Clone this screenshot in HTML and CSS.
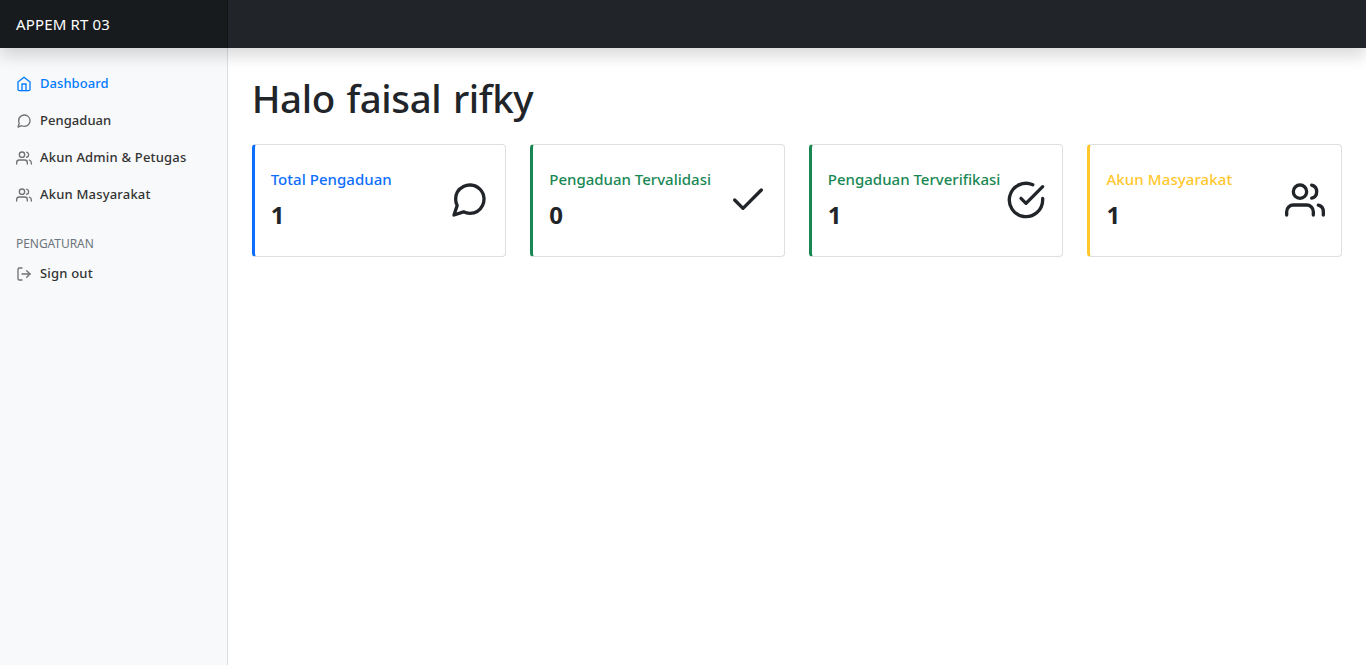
FILE: index.html
```html
<!DOCTYPE html>
<html lang="id">
<head>
<meta charset="utf-8">
<title>Dashboard</title>
<link rel="stylesheet" href="styles.css">
</head>
<body>
<svg class="sprite" xmlns="http://www.w3.org/2000/svg">
  <symbol id="home" viewBox="0 0 24 24"><path d="M3 9l9-7 9 7v11a2 2 0 0 1-2 2H5a2 2 0 0 1-2-2z"/><path d="M9 22V12h6v10"/></symbol>
  <symbol id="message" viewBox="0 0 24 24"><path d="M21 11.5a8.38 8.38 0 0 1-.9 3.8 8.5 8.5 0 0 1-7.6 4.7 8.38 8.38 0 0 1-3.8-.9L3 21l1.9-5.7a8.38 8.38 0 0 1-.9-3.8 8.5 8.5 0 0 1 4.7-7.6 8.38 8.38 0 0 1 3.8-.9h.5a8.48 8.48 0 0 1 8 8v.5z"/></symbol>
  <symbol id="users" viewBox="0 0 24 24"><path d="M17 21v-2a4 4 0 0 0-4-4H5a4 4 0 0 0-4 4v2"/><circle cx="9" cy="7" r="4"/><path d="M23 21v-2a4 4 0 0 0-3-3.87"/><path d="M16 3.13a4 4 0 0 1 0 7.75"/></symbol>
  <symbol id="logout" viewBox="0 0 24 24"><path d="M9 21H5a2 2 0 0 1-2-2V5a2 2 0 0 1 2-2h4"/><path d="M16 17l5-5-5-5"/><path d="M21 12H9"/></symbol>
  <symbol id="check" viewBox="0 0 24 24"><path d="M20 6L9 17l-5-5"/></symbol>
  <symbol id="check-circle" viewBox="0 0 24 24"><path d="M22 11.08V12a10 10 0 1 1-5.93-9.14"/><path d="M22 4L12 14.01l-3-3"/></symbol>
</svg>
<header class="navbar"><a class="brand">APPEM RT 03</a></header>
<div class="layout">
  <nav class="sidebar">
    <a class="nav-link active"><svg class="icon"><use href="#home"/></svg><span>Dashboard</span></a>
    <a class="nav-link"><svg class="icon"><use href="#message"/></svg><span>Pengaduan</span></a>
    <a class="nav-link wide"><svg class="icon"><use href="#users"/></svg><span>Akun Admin &amp; Petugas</span></a>
    <a class="nav-link wide"><svg class="icon"><use href="#users"/></svg><span>Akun Masyarakat</span></a>
    <h6 class="heading">Pengaturan</h6>
    <a class="nav-link wide"><svg class="icon"><use href="#logout"/></svg><span>Sign out</span></a>
  </nav>
  <main class="main">
    <h1 class="title">Halo faisal rifky</h1>
    <div class="cards">
      <section class="card blue"><div><h2 class="label">Total Pengaduan</h2><p class="value">1</p></div><svg class="icon-lg"><use href="#message"/></svg></section>
      <section class="card green"><div><h2 class="label">Pengaduan Tervalidasi</h2><p class="value">0</p></div><svg class="icon-lg"><use href="#check"/></svg></section>
      <section class="card green"><div><h2 class="label">Pengaduan Terverifikasi</h2><p class="value">1</p></div><svg class="icon-lg"><use href="#check-circle"/></svg></section>
      <section class="card yellow"><div><h2 class="label">Akun Masyarakat</h2><p class="value">1</p></div><svg class="icon-lg"><use href="#users"/></svg></section>
    </div>
  </main>
</div>
</body>
</html>
```
FILE: styles.css
```css
* { box-sizing: border-box; }
body {
  margin: 0;
  height: 100vh;
  display: flex;
  flex-direction: column;
  font-family: "Noto Sans", "Open Sans", sans-serif;
  color: #212529;
  background: #fff;
  overflow: hidden;
}
.sprite { display: none; }
svg { fill: none; stroke: currentColor; stroke-width: 2; stroke-linecap: round; stroke-linejoin: round; flex: none; }
.navbar {
  height: 48px;
  flex: none;
  background: #212529;
  box-shadow: 0 8px 16px rgba(0, 0, 0, .15);
  position: relative;
  z-index: 2;
}
.brand {
  display: block;
  width: 16.6667%;
  height: 48px;
  padding: 12px 16px;
  font-size: 15px;
  line-height: 24px;
  letter-spacing: .15px;
  color: #fff;
  background: rgba(0, 0, 0, .25);
  box-shadow: inset -1px 0 0 rgba(0, 0, 0, .25);
}
.layout { flex: 1; display: flex; }
.sidebar {
  width: 16.6667%;
  flex: none;
  padding-top: 16px;
  background: #f8f9fa;
  box-shadow: inset -1px 0 0 rgba(0, 0, 0, .1);
}
.nav-link {
  display: flex;
  align-items: center;
  gap: 8px;
  height: 37px;
  padding: 0 16px;
  font-size: 13px;
  font-weight: 500;
  letter-spacing: .05px;
  color: #333;
  white-space: nowrap;
}
.wide { letter-spacing: .19px; }
.nav-link.active { color: #007bff; }
.icon { width: 16px; height: 16px; color: #727272; position: relative; top: 1px; }
.active .icon { color: inherit; }
.heading {
  margin: 25px 0 3px;
  padding: 0 16px;
  font-size: 12px;
  line-height: 14px;
  font-weight: 400;
  letter-spacing: -.05px;
  color: #6c757d;
  text-transform: uppercase;
}
.main { flex: 1; padding: 26px 24px 0; }
.title { margin: 0 0 22px; font-size: 38.5px; line-height: 48px; font-weight: 500; letter-spacing: -.4px; word-spacing: 2px; }
.cards { display: grid; grid-template-columns: repeat(4, 1fr); gap: 24px; }
.card {
  height: 113px;
  display: flex;
  align-items: center;
  justify-content: space-between;
  padding: 0 16px 2px;
  border: 1px solid #dfdfdf;
  border-left: 3px solid;
  border-radius: 4px;
}
.blue { border-left-color: #0d6efd; }
.green { border-left-color: #198754; }
.yellow { border-left-color: #ffc72c; }
.label { margin: 0 0 12px; font-size: 15px; line-height: 18px; font-weight: 500; white-space: nowrap; }
.blue .label { color: #0d6efd; letter-spacing: .04px; }
.green .label { color: #198754; }
.yellow .label { color: #ffc72c; letter-spacing: .1px; }
.value { margin: 0; font-size: 24px; line-height: 29px; font-weight: 700; }
.icon-lg { width: 40px; height: 40px; }
```
